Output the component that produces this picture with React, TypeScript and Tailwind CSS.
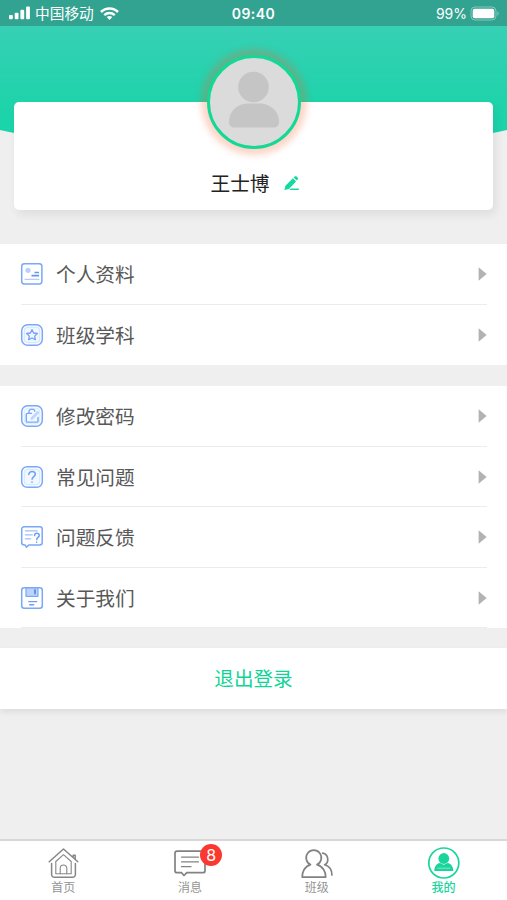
import React from 'react';

type IconName = 'profile' | 'subject' | 'password' | 'question' | 'feedback' | 'about';

function RowIcon({ name }: { name: IconName }) {
  return (
    <svg className="h-[24px] w-[24px] shrink-0" viewBox="0 0 24 24" fill="none" stroke="#79a8f7" strokeWidth="1.3" strokeLinecap="round" strokeLinejoin="round">
      {name === 'profile' && (
        <>
          <rect x="1.7" y="1.7" width="20.2" height="20.2" rx="2.6" strokeWidth="1.5" />
          <circle cx="8" cy="8.3" r="2.6" fill="#b9d0fa" stroke="none" />
          <path d="M14.5 10.5h4.5M11.5 13.6H19" stroke="#6396f0" strokeWidth="1.7" strokeLinecap="butt" />
          <path d="M5 17.4h14" stroke="#b4cdf9" strokeWidth="1.1" />
        </>
      )}
      {name === 'subject' && (
        <>
          <rect x="1.7" y="1.7" width="20.6" height="20.6" rx="6" strokeWidth="1.5" />
          <rect x="4.2" y="4.2" width="15.6" height="15.6" rx="3.5" fill="#f1f7ff" stroke="#cfe2ff" strokeWidth="1" />
          <path d="m12 6.7 1.6 3.3 3.7.5-2.6 2.6.6 3.7-3.3-1.8-3.3 1.8.6-3.7-2.6-2.6 3.7-.5z" stroke="#73a1f2" />
        </>
      )}
      {name === 'password' && (
        <>
          <rect x="1.7" y="1.7" width="20.6" height="20.6" rx="6" strokeWidth="1.5" />
          <rect x="4.2" y="4.2" width="15.6" height="15.6" rx="3.5" fill="#f4f9ff" stroke="#d8e8ff" strokeWidth="1" />
          <path d="M11.5 9.4H7.5a1.2 1.2 0 0 0-1.2 1.2v6.3a1.2 1.2 0 0 0 1.2 1.2h9.3a1.2 1.2 0 0 0 1.2-1.2v-3.4M9 9.3V7.3a2 2 0 0 1 2-1.9h1.8a2 2 0 0 1 2 1.9" strokeWidth="1.4" />
          <path d="m11.8 14.6 6-6" stroke="#bdd6fd" strokeWidth="2.8" />
        </>
      )}
      {name === 'question' && (
        <>
          <rect x="1.7" y="1.7" width="20.6" height="20.6" rx="5.5" strokeWidth="1.5" />
          <rect x="4.2" y="4.2" width="15.6" height="15.6" rx="3.5" fill="#f1f7ff" stroke="#d0e5ff" strokeWidth="1" />
          <path d="M8.8 9.5c0-4 6.5-3.7 6.5-.2 0 2.2-3 2.5-3.2 4.9M12 17v.2" stroke="#70a0f1" strokeWidth="1.5" />
        </>
      )}
      {name === 'feedback' && (
        <>
          <path d="M4.2 1.7h15.5a2.5 2.5 0 0 1 2.5 2.5v13.2a2.5 2.5 0 0 1-2.5 2.5H9.1l-2.7 2.3-1.2-2.3h-1a2.5 2.5 0 0 1-2.5-2.5V4.2a2.5 2.5 0 0 1 2.5-2.5Z" strokeWidth="1.5" />
          <path d="M5.3 5.8h11.9M5.3 9.8h7M5.3 13.8h5.4" stroke="#9dbff8" />
          <path d="M14.6 10.4c.1-3.2 4.9-2.7 4.6.2-.2 1.8-2.4 1.9-2.5 4M16.6 17.1v.2" stroke="#6e9ff2" strokeWidth="1.5" />
        </>
      )}
      {name === 'about' && (
        <>
          <rect x="1.7" y="1.7" width="20.6" height="20.6" rx="2.5" strokeWidth="1.5" />
          <path d="M6 2v8.3h12V2Z" fill="#bcd4fd" strokeWidth="1.2" />
          <path d="M15 4v3.5" stroke="#5b8ce8" strokeWidth="1.8" />
          <path d="M8.7 15.6h8M9.7 18.8h4" stroke="#6d9ef3" strokeWidth="1.4" />
        </>
      )}
    </svg>
  );
}

function Row({ icon, label, line = true }: { icon: IconName; label: string; line?: boolean }) {
  return (
    <div className="relative flex h-[60.6px] items-center pr-5 pl-5">
      <RowIcon name={icon} />
      <span className="ml-3 flex-1 text-[19.7px] leading-7 text-[#585858]">{label}</span>
      <svg className="h-[14px] w-[9px]" viewBox="0 0 9 14">
        <path d="M.6.3 8.6 7 .6 13.7Z" fill="#b2b2b2" />
      </svg>
      {line && <div className="absolute right-5 bottom-0 left-[21px] h-px bg-[#ececec]" />}
    </div>
  );
}

function StatusBar() {
  return (
    <div className="relative flex h-[26px] shrink-0 items-center justify-between bg-[#33a391] pr-[7px] pl-[9px] text-white">
      <div className="flex items-center">
        <svg className="h-[14px] w-[21px]" viewBox="0 0 21 14" fill="#fff">
          <rect x="0" y="9" width="3.8" height="4.2" rx="1" />
          <rect x="5.7" y="6.7" width="3.8" height="6.5" rx="1" />
          <rect x="11.4" y="3.8" width="3.8" height="9.4" rx="1" />
          <rect x="17.1" y="0.4" width="3.8" height="12.8" rx="1" />
        </svg>
        <span className="ml-[5px] text-[14.7px] leading-[26px]">中国移动</span>
        <svg className="ml-[6px] h-[13px] w-[19px]" viewBox="0 0 19 13" fill="none" stroke="#fff" strokeWidth="2.5">
          <path d="M1 5C5.7.3 13.3.3 18 5" />
          <path d="M4.3 8.1c3-2.7 7.4-2.7 10.4 0" />
          <path d="M9.5 12.9 6.7 10.1c1.7-1.5 3.9-1.5 5.6 0Z" fill="#fff" stroke="none" />
        </svg>
      </div>
      <span className="absolute inset-x-0 pt-px text-center font-['Inter','Liberation_Sans',sans-serif] text-[14px] leading-[26px] font-semibold tracking-[0.5px]">09:40</span>
      <div className="flex items-center">
        <span className="pt-px font-['Inter','Liberation_Sans',sans-serif] text-[14px] leading-[26px]">99%</span>
        <svg className="ml-[3px] h-[15px] w-[30px]" viewBox="0 0 30 15">
          <rect x="1" y="1" width="25" height="13" rx="4" fill="none" stroke="#fff" strokeOpacity=".4" />
          <rect x="2.7" y="2.7" width="21.6" height="9.6" rx="2" fill="#fff" />
          <path d="M27.4 5.3c1.7.8 1.7 3.6 0 4.4Z" fill="#fff" fillOpacity=".4" />
        </svg>
      </div>
    </div>
  );
}

function Profile() {
  return (
    <div className="h-[218px] shrink-0">
      <svg className="block h-[124px] w-full" viewBox="0 0 507 124" preserveAspectRatio="none">
        <defs>
          <linearGradient id="header" x1="0" y1="0" x2="0" y2="1">
            <stop offset="0" stopColor="#37d0b5" />
            <stop offset=".65" stopColor="#20d3ab" />
            <stop offset="1" stopColor="#19d4a9" />
          </linearGradient>
        </defs>
        <path d="M0 0H507V104Q486 109 460 112H47Q21 109 0 104Z" fill="url(#header)" />
      </svg>
      <div className="relative mx-[14px] -mt-[48px] flex h-[108px] flex-col items-center rounded-[5px] bg-white shadow-[3px_5px_10px_rgba(0,0,0,0.07)]">
        <div className="-mt-[47px] h-[94px] w-[94px] shrink-0 rounded-full border-[3px] border-[#12d996] bg-[#dbdbdb] shadow-[0_0_6px_6px_rgba(244,92,35,0.25)]">
          <svg className="h-[88px] w-[88px]" viewBox="0 0 88 88" fill="#c5c5c5">
            <circle cx="43.5" cy="29" r="15.3" />
            <path d="M19 63.500C19 53 28 45.500 38 45.500h11.500C60 45.500 69 53 69 63.500c0 4-2 6-6 6H25c-4 0-6-2-6-6Z" />
          </svg>
        </div>
        <div className="mt-[19px] flex h-[30px] items-center pl-[3px]">
          <span className="text-[19.7px] leading-[30px] text-[#222]">王士博</span>
          <svg className="ml-[13px] h-[17px] w-[17px]" viewBox="0 0 16 16" fill="#14d9a0">
            <path d="m1.3 14.2 1-4.2 7-6.9 3 3-6.700 7ZM10 2.400l1-.9c.6-.5 1.200-.5 1.800 0l1 .9c.5.600.5 1.200 0 1.800l-.9 1Z" />
            <path d="M7.400 12.800h7.500v1.400H6Z" />
          </svg>
        </div>
      </div>
    </div>
  );
}

function HomeIcon() {
  return (
    <svg className="h-[34px] w-[34px]" viewBox="0 0 34 34" fill="none" stroke="#868686" strokeWidth="1.5" strokeLinecap="round" strokeLinejoin="round">
      <path d="M3.2 15.7 17.500 3 31.800 15.700M27.200 10.500V9.200h2V13M5.600 17.500v11a2.800 2.800 0 0 0 2.800 2.800h18.200a2.800 2.800 0 0 0 2.800-2.800v-11" />
      <path d="M9.800 27.800V15.500l7.700-6.800 7.700 6.800v12.300M9.800 27.800h15.400" strokeWidth="1.100" />
      <path d="M14.200 27.800v-5.500a3.300 3.300 0 0 1 6.600 0v5.500" strokeWidth="1.100" />
    </svg>
  );
}

function MessageIcon() {
  return (
    <svg className="h-[34px] w-[34px]" viewBox="0 0 34 34" fill="none" stroke="#828282" strokeWidth="1.7" strokeLinecap="round" strokeLinejoin="round">
      <path d="M4 5.200h26a2 2 0 0 1 2 2v17.500a2 2 0 0 1-2 2H13.800l-2.800 2.800-2.600-2.800H4a2 2 0 0 1-2-2V7.200a2 2 0 0 1 2-2Z" />
      <path d="M8.500 11.200h17M8.500 15.900h17M8.500 20.700H18" strokeWidth="1.200" />
    </svg>
  );
}

function ClassIcon() {
  return (
    <svg className="h-[34px] w-[34px]" viewBox="0 0 34 34" fill="none" stroke="#828282" strokeWidth="1.700" strokeLinecap="round" strokeLinejoin="round">
      <path d="M10.500 18.600A7.600 7.600 0 1 1 17 18.600C23 20.200 25.800 25.800 25.700 31.100H2.200C2.100 25.800 4.700 20.200 10.500 18.600Z" />
      <path d="M22.700 7.200c6 1 6.700 9.400 1.900 11.500 4.700 1.300 7.300 5.300 7.300 10.300" />
    </svg>
  );
}

function MeIcon() {
  return (
    <svg className="h-[34px] w-[34px]" viewBox="0 0 34 34" fill="none">
      <circle cx="16.800" cy="17" r="15" stroke="#19d59b" strokeWidth="1.700" />
      <circle cx="16.800" cy="12.500" r="5.400" fill="#19d59b" />
      <path d="M13 16.900 16.800 18.800l3.800-1.900c3.300.5 5.600 3.200 5.700 8.100H7.300c.1-4.900 2.400-7.600 5.700-8.100Z" fill="#19d59b" />
      <path d="M10.300 22.200h13" stroke="#9cebd5" strokeWidth=".8" />
    </svg>
  );
}

function Tab({ label, active = false, children }: { label: string; active?: boolean; children: React.ReactNode }) {
  return (
    <div className="flex flex-1 flex-col items-center pt-[5px]">
      <div className="relative h-[33px]">{children}</div>
      <span className={`text-[12px] leading-[16px] ${active ? 'font-medium text-[#19d59b]' : 'text-[#949494]'}`}>{label}</span>
    </div>
  );
}

export default function App() {
  return (
    <div className="flex h-[900px] w-[507px] flex-col overflow-hidden bg-[#efefef] font-['Noto_Sans_CJK_SC',sans-serif]">
      <StatusBar />
      <Profile />
      <div className="flex h-[121px] shrink-0 flex-col bg-white">
        <Row icon="profile" label="个人资料" />
        <Row icon="subject" label="班级学科" line={false} />
      </div>
      <div className="mt-[21px] h-[242px] shrink-0 bg-white">
        <Row icon="password" label="修改密码" />
        <Row icon="question" label="常见问题" />
        <Row icon="feedback" label="问题反馈" />
        <Row icon="about" label="关于我们" />
      </div>
      <button className="mt-[20px] h-[61px] w-full shrink-0 bg-white pb-px text-[19.6px] text-[#0fd496] shadow-[0_3px_6px_rgba(0,0,0,0.08)]">退出登录</button>
      <div className="mt-auto flex h-[61px] shrink-0 border-t-2 border-[#d8d8d8] bg-white">
        <Tab label="首页"><HomeIcon /></Tab>
        <Tab label="消息">
          <MessageIcon />
          <span className="absolute -top-[2px] left-[27px] flex h-[22px] w-[22px] items-center justify-center rounded-full bg-[#fb3830] font-['Inter','Liberation_Sans',sans-serif] text-[16px] leading-none text-white">8</span>
        </Tab>
        <Tab label="班级"><ClassIcon /></Tab>
        <Tab label="我的" active><MeIcon /></Tab>
      </div>
    </div>
  );
}
